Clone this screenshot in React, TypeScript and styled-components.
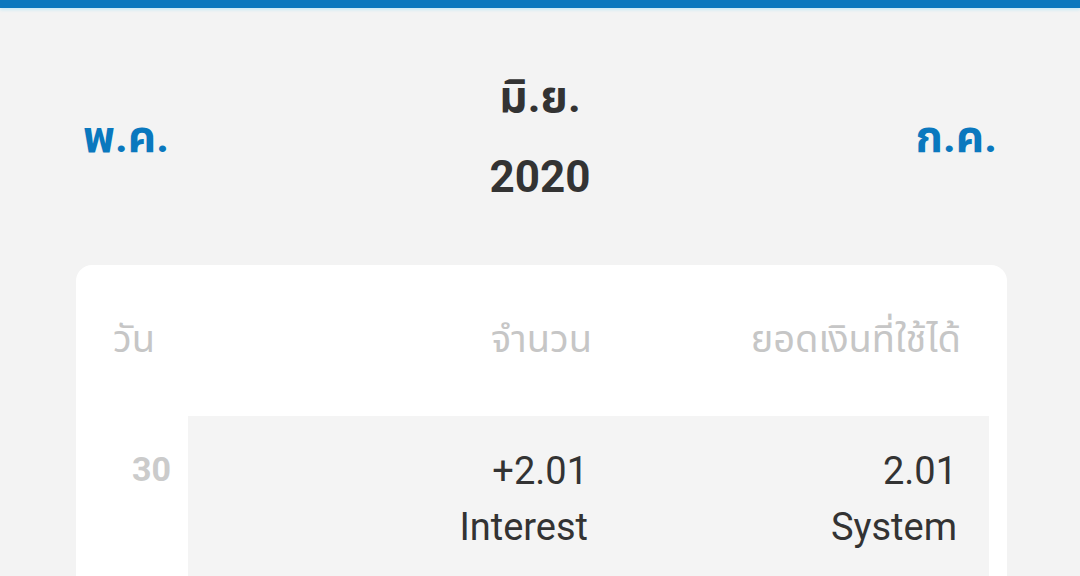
import React from 'react';
import styled, { createGlobalStyle } from 'styled-components';

const GlobalStyle = createGlobalStyle`
  html, body {
    margin: 0;
    padding: 0;
    background: #f3f3f3;
    font-family: Roboto, "Noto Sans Thai", "Noto Sans Thai UI", Loma, Garuda, "Noto Sans", sans-serif;
    overflow: hidden;
  }
`;

interface Entry {
  day: string;
  amount: string;
  amountLabel: string;
  balance: string;
  balanceLabel: string;
}

const entries: Entry[] = [
  { day: '30', amount: '+2.01', amountLabel: 'Interest', balance: '2.01', balanceLabel: 'System' },
];

const App: React.FC = () => {
  return (
    <>
      <GlobalStyle />
      <Page>
        <TopBar />
        <MonthNav>
          <NavLink side="left">พ.ค.</NavLink>
          <CurrentMonth>
            <MonthLine>มิ.ย.</MonthLine>
            <MonthLine>2020</MonthLine>
          </CurrentMonth>
          <NavLink side="right">ก.ค.</NavLink>
        </MonthNav>

        <Card>
          <TableHeader>
            <HeaderCell align="left">วัน</HeaderCell>
            <HeaderCell align="right">จำนวน</HeaderCell>
            <HeaderCell align="right">ยอดเงินที่ใช้ได้</HeaderCell>
          </TableHeader>

          {entries.map(e => (
            <Row key={e.day}>
              <DayCell>{e.day}</DayCell>
              <RowBody>
                <ValueCell>
                  <Value>{e.amount}</Value>
                  <Value>{e.amountLabel}</Value>
                </ValueCell>
                <ValueCell>
                  <Value>{e.balance}</Value>
                  <Value>{e.balanceLabel}</Value>
                </ValueCell>
              </RowBody>
            </Row>
          ))}
        </Card>
      </Page>
    </>
  );
};

export default App;

const Page = styled.div`
  width: 1080px;
  height: 576px;
  display: flex;
  flex-direction: column;
  background: #f3f3f3;
`;

const TopBar = styled.div`
  height: 8px;
  flex: none;
  background: #0a78be;
  box-shadow: 0 2px 3px rgba(120, 220, 255, 0.35);
`;

const MonthNav = styled.div`
  display: grid;
  grid-template-columns: 1fr auto 1fr;
  align-items: center;
  padding: 49px 83px 0 83px;
`;

const NavLink = styled.div<{ side: 'left' | 'right' }>`
  justify-self: ${p => (p.side === 'left' ? 'start' : 'end')};
  color: #0a78be;
  font-size: 44px;
  font-weight: 700;
  line-height: 80px;
  cursor: pointer;
`;

const CurrentMonth = styled.div`
  display: flex;
  flex-direction: column;
  align-items: center;
  color: #333333;
`;

const MonthLine = styled.div`
  font-size: 44px;
  font-weight: 700;
  line-height: 80px;
`;

const Card = styled.div`
  flex: 1;
  margin: 48px 73px 0 76px;
  padding-right: 18px;
  background: #ffffff;
  border-radius: 16px 16px 0 0;
`;

const TableHeader = styled.div`
  display: grid;
  grid-template-columns: 112px 432px 1fr;
  align-items: center;
  height: 151px;
`;

const HeaderCell = styled.div<{ align: 'left' | 'right' }>`
  text-align: ${p => p.align};
  padding-left: ${p => (p.align === 'left' ? '37px' : '0')};
  padding-right: ${p => (p.align === 'right' ? '28px' : '0')};
  color: #c6c6c6;
  font-size: 38px;
  font-weight: 400;
`;

const Row = styled.div`
  display: grid;
  grid-template-columns: 112px 1fr;
`;

const DayCell = styled.div`
  padding: 25px 0 0 56px;
  color: #cbcbcb;
  font-size: 34px;
  font-weight: 700;
  line-height: 56px;
`;

const RowBody = styled.div`
  display: grid;
  grid-template-columns: 432px 1fr;
  background: #f4f4f4;
  padding: 27px 0 30px 0;
`;

const ValueCell = styled.div`
  display: flex;
  flex-direction: column;
  align-items: flex-end;
  padding-right: 32px;
`;

const Value = styled.div`
  color: #333333;
  font-size: 38px;
  line-height: 56px;
`;
